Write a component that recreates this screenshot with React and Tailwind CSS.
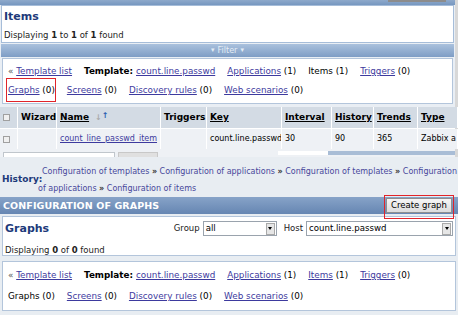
import React from "react";

const F = { fontFamily: '"DejaVu Sans", Verdana, sans-serif' };

function L({ children, className = "" }) {
  return <span className={"text-[#3d3a9e] underline underline-offset-[1px] " + className}>{children}</span>;
}

function Select({ value, w }) {
  return (
    <div className={"h-[15px] bg-white border border-[#9aa3ad] flex items-center justify-between pl-[2px] " + w}>
      <span className="text-[8.6px] text-black leading-none">{value}</span>
      <span className="w-[9px] h-[12px] mr-[1px] bg-[#e6e6e6] border border-[#a9a9a9] flex items-center justify-center">
        <span className="block w-0 h-0 border-l-[2px] border-r-[2px] border-t-[3px] border-l-transparent border-r-transparent border-t-black" />
      </span>
    </div>
  );
}

function LinksBox({ h, gap, linked, boxed }) {
  return (
    <div className={"bg-white border border-[#b3c5db] mx-[2px] px-[5px] text-[8.8px] text-black leading-none flex flex-col justify-center " + h + " " + gap}>
      <div className="flex items-center whitespace-nowrap">
        <span className="text-[#555]">«&nbsp;</span>
        <L>Template list</L>
        <span className="ml-[12px] font-bold">Template:&nbsp;</span>
        <L>count.line.passwd</L>
        <span className="ml-[12px]"><L>Applications</L> (1)</span>
        <span className="ml-[12px]">{linked ? <L>Items</L> : "Items"} (1)</span>
        <span className="ml-[12px]"><L>Triggers</L> (0)</span>
      </div>
      <div className="flex items-center whitespace-nowrap">
        <span className="relative">
          {linked ? "Graphs" : <L>Graphs</L>} (0)
          {boxed && (
            <span className="absolute left-[-2px] top-[-8px] w-[50px] h-[24px] border border-[#e0242a]" />
          )}
        </span>
        <span className="ml-[12px]"><L>Screens</L> (0)</span>
        <span className="ml-[12px]"><L>Discovery rules</L> (0)</span>
        <span className="ml-[12px]"><L>Web scenarios</L> (0)</span>
      </div>
    </div>
  );
}

const cols = [18, 39, 104, 46, 75, 50, 42, 44, 40];

function Cell({ i, children, head }) {
  return (
    <div
      style={{ width: cols[i] }}
      className={
        "shrink-0 h-full flex items-center pl-[3px] overflow-hidden whitespace-nowrap border-r border-white " +
        (head ? "bg-[#d3dbe4]" : "bg-[#eef1f5]")
      }
    >
      {children}
    </div>
  );
}

function Box() {
  return <span className="block w-[7px] h-[7px] border border-[#a0a0a0] bg-[#f0f0f0]" />;
}

export default function App() {
  return (
    <div style={F} className="w-[458px] h-[315px] overflow-hidden bg-[#e8edf2] flex flex-col">
      {/* top screenshot */}
      <div className="bg-[#e9eef4] flex flex-col border-r-[3px] border-[#d8d8d8]">
        <div className="h-[5px] bg-gradient-to-b from-[#8ea9cb] to-[#7697c0] flex justify-end pr-[9px]">
          <div className="w-[58px] h-[2px] bg-[#8c8c8c]" />
        </div>
        <div className="h-[38px] bg-white border border-[#a6bdd9] mx-[1px] px-[2px] pt-[5px] flex flex-col gap-[9px]">
          <div className="text-[11px] font-bold text-[#1d3a7a] leading-none">Items</div>
          <div className="text-[8.5px] text-[#222] leading-none">
            Displaying <b>1</b> to <b>1</b> of <b>1</b> found
          </div>
        </div>
        <div className="mt-[1px] h-[13px] bg-gradient-to-b from-[#aac1dd] to-[#7e9dc5] mx-[1px] flex items-center justify-center text-[8px] text-[#e4ecf5] leading-none">
          <span className="mr-[3px] text-[7px]">▾</span>Filter<span className="ml-[3px] text-[7px]">▾</span>
        </div>
        <div className="h-[1px]" />
        <LinksBox h="h-[46px]" gap="gap-[10px]" boxed />
        <div className="h-[3px]" />
        <div className="h-[21px] flex text-[9px] font-bold text-black leading-none">
          <Cell i={0} head><Box /></Cell>
          <Cell i={1} head>Wizard</Cell>
          <Cell i={2} head>
            <span className="underline">Name</span>
            <span className="ml-[6px] text-[#aaa] text-[8px]">↓</span>
            <span className="text-[#2a5db0] text-[8px] -mt-[4px]">↑</span>
          </Cell>
          <Cell i={3} head>Triggers</Cell>
          <Cell i={4} head><span className="underline">Key</span></Cell>
          <Cell i={5} head><span className="underline">Interval</span></Cell>
          <Cell i={6} head><span className="underline">History</span></Cell>
          <Cell i={7} head><span className="underline">Trends</span></Cell>
          <Cell i={8} head><span className="underline">Type</span></Cell>
        </div>
        <div className="h-[1px] bg-white" />
        <div className="h-[20px] flex text-[8px] text-black leading-none">
          <Cell i={0}><Box /></Cell>
          <Cell i={1}></Cell>
          <Cell i={2}><L>count_line_passwd_item</L></Cell>
          <Cell i={3}></Cell>
          <Cell i={4}>count.line.passwd</Cell>
          <Cell i={5}>30</Cell>
          <Cell i={6}>90</Cell>
          <Cell i={7}>365</Cell>
          <Cell i={8}>Zabbix a</Cell>
        </div>
        <div className="h-[8px] flex items-end bg-[#eef1f5]">
          <div className="w-[112px] h-[5px] ml-[3px] bg-white border border-[#c0c6cc] border-b-0" />
          <div className="w-[40px] h-[5px] ml-[3px] bg-[#e0e0e0] border border-[#c8c8c8] border-b-0" />
          <div className="flex-1 h-[4px] ml-[120px] mb-[2px] bg-[#a9bdd6] flex">
            <div className="w-[50px] h-full bg-white" />
          </div>
        </div>
      </div>

      {/* bottom screenshot */}
      <div className="flex-1 bg-[#e8edf2] flex flex-col">
        <div className="h-[40px] flex items-center pl-[2px] pt-[5px]">
          <div className="text-[9px] font-bold text-[#1d3a7a] leading-none w-[36px]">History:</div>
          <div className="text-[8px] text-[#47479b] leading-[17px]">
            <div className="pl-[4px] whitespace-nowrap">
              Configuration of templates <b className="text-[#333]">»</b> Configuration of applications <b className="text-[#333]">»</b> Configuration of templates <b className="text-[#333]">»</b> Configuration
            </div>
            <div className="whitespace-nowrap">
              of applications <b className="text-[#333]">»</b> Configuration of items
            </div>
          </div>
        </div>
        <div className="h-[17px] bg-gradient-to-b from-[#87a3c8] to-[#6686b2] flex items-center justify-between pl-[3px] pr-[6px]">
          <span className="text-[9.5px] font-bold text-white leading-none tracking-[0.1px]">CONFIGURATION OF GRAPHS</span>
          <span className="relative h-[15px] w-[66px] justify-center bg-gradient-to-b from-[#f6f6f6] to-[#dcdcdc] border border-[#8f8f8f] text-[8.5px] text-black flex items-center leading-none">
            Create graph
            <span className="absolute left-[-3px] right-[-3px] top-[-4px] bottom-[-7px] border border-[#e0242a]" />
          </span>
        </div>
        <div className="h-[2px]" />
        <div className="h-[40px] bg-white border border-[#b3c5db] mx-[2px] px-[2px] pt-[4px] flex flex-col gap-[10px]">
          <div className="flex items-center justify-between">
            <span className="text-[11px] font-bold text-[#1d3a7a] leading-none">Graphs</span>
            <div className="flex items-center text-[8.5px] text-[#222] leading-none">
              <span className="mr-[3px]">Group</span>
              <Select value="all" w="w-[74px]" />
              <span className="ml-[7px] mr-[3px]">Host</span>
              <Select value="count.line.passwd" w="w-[147px]" />
            </div>
          </div>
          <div className="text-[8.5px] text-[#222] leading-none">
            Displaying <b>0</b> of <b>0</b> found
          </div>
        </div>
        <div className="h-[5px]" />
        <LinksBox h="h-[50px]" gap="gap-[12px]" linked />
      </div>
    </div>
  );
}
